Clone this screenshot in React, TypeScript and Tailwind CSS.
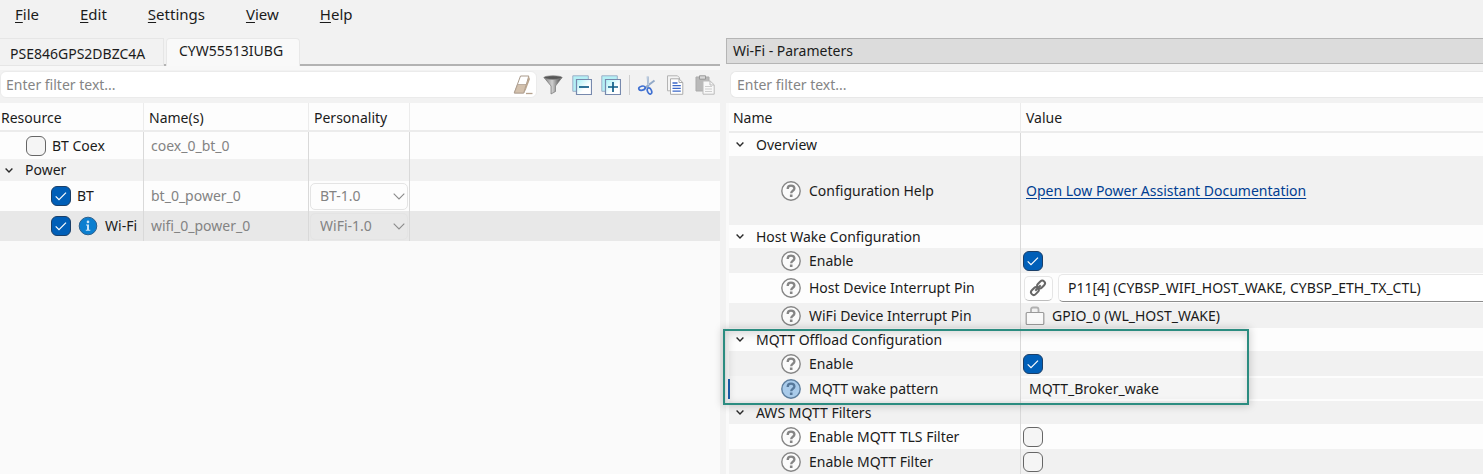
import { useId, type ReactNode } from "react";

const Chevron = ({ className = "" }: { className?: string }) => (
  <svg className={className} width="8" height="5" viewBox="0 0 8 5" fill="none" stroke="#2a2a2a" strokeWidth="1.4" aria-hidden="true">
    <path d="M.6.6 4 4 7.4.6" />
  </svg>
);

const HelpIcon = ({ active = false }: { active?: boolean }) => (
  <svg className="shrink-0" width="20" height="20" viewBox="0 0 20 20" fill="none" aria-hidden="true">
    <circle cx="10" cy="10" r="9.2" fill={active ? "#a9cbea" : "#fbfbfb"} stroke={active ? "#5d7e9e" : "#868686"} strokeWidth="1.4" />
    <path d="M6.700 7.900c0-2.200 1.400-3.300 3.300-3.300s3.400 1.100 3.400 2.900c0 2.300-3.200 2.300-3.200 4.800" stroke={active ? "#56789a" : "#858585"} strokeWidth="2.300" />
    <rect x="8.900" y="13.500" width="2.600" height="2.500" fill={active ? "#56789a" : "#858585"} />
  </svg>
);

const InfoIcon = () => (
  <svg className="shrink-0" width="20" height="20" viewBox="0 0 20 20" aria-hidden="true">
    <circle cx="10" cy="10" r="8.8" fill="#0b7fd0" stroke="#2c5f8c" strokeWidth="1" />
    <circle cx="10" cy="5.9" r="1.3" fill="#c7e4f8" />
    <path d="M8 8.6h3v5.2h1.3v1H7.8v-1H9V9.6H8z" fill="#c7e4f8" />
  </svg>
);

const EraserIcon = () => (
  <svg width="20" height="20" viewBox="0 0 20 20" aria-hidden="true">
    <path d="M7.5 1h8.3l-5 17H1.2z" fill="#fff" stroke="#a99a8b" />
    <path d="M4.6 9.5h8.6L10.6 18H1.4z" fill="#d3c1ad" stroke="#a99a8b" strokeWidth=".7" />
    <path d="M15.8 1.2 17 4l-4.2 11-2 3z" fill="#bba68f" />
    <path d="M13 18.5h6.5" stroke="#b5a28e" strokeWidth="1.3" />
  </svg>
);

const FunnelIcon = () => (
  <svg width="20" height="20" viewBox="0 0 20 20" aria-hidden="true">
    <defs>
      <linearGradient id="funnel" x1="0" x2="1">
        <stop offset="0" stopColor="#777" />
        <stop offset=".45" stopColor="#d0d0d0" />
        <stop offset="1" stopColor="#3c3c3c" />
      </linearGradient>
    </defs>
    <path d="M1 2.5 8 11v8l4.5-2.5V11L19 2.5z" fill="url(#funnel)" stroke="#777" strokeWidth=".7" />
    <ellipse cx="10" cy="2.6" rx="9" ry="1.8" fill="#555" stroke="#8b8b8b" strokeWidth=".7" />
  </svg>
);

const TreeBoxIcon = ({ plus = false }: { plus?: boolean }) => (
  <svg width="20" height="20" viewBox="0 0 20 20" fill="none" aria-hidden="true">
    <defs>
      <linearGradient id="treebox" x1="0" y1="0" x2="1" y2="1">
        <stop offset="0" stopColor="#a6f1f6" />
        <stop offset=".6" stopColor="#fff" />
      </linearGradient>
    </defs>
    <path d="M.8.8h15.5v15.5H.8z" fill="#b4f0f5" stroke="#9db0c8" />
    <path d="M4.5 4.5h15v15h-15z" fill="url(#treebox)" stroke="#7789ad" strokeWidth="1.2" />
    <path d={plus ? "M7 12h10M12 7v10" : "M7 12h10"} stroke="#0d5c86" strokeWidth="1.7" />
  </svg>
);

const ScissorsIcon = () => (
  <svg width="20" height="20" viewBox="0 0 20 20" fill="none" aria-hidden="true">
    <path d="M10.7 1.5 11.3 11 9.5 13M17.5 5.5 8 12.8" stroke="#93aac8" strokeWidth="2" />
    <path d="M10.7 1.5 11.3 10" stroke="#e3ebf5" strokeWidth=".7" />
    <ellipse cx="5" cy="13.2" rx="3.3" ry="2" transform="rotate(-15 5 13.2)" stroke="#3f70d2" strokeWidth="1.7" />
    <ellipse cx="12.5" cy="16" rx="2" ry="3.2" transform="rotate(-22 12.5 16)" stroke="#3f70d2" strokeWidth="1.7" />
  </svg>
);

const CopyIcon = () => (
  <svg width="20" height="20" viewBox="0 0 20 20" fill="none" aria-hidden="true">
    <path d="M1.5.8h10l2 2v13h-12z" fill="#f4f4f4" stroke="#b4b4b4" />
    <path d="M4.5 3.8h8.5l3.8 3.7v11.8H4.5z" fill="#fff" stroke="#aaa" />
    <path d="M13 3.8v3.7h3.8" stroke="#aaa" />
    <path d="M6.5 8h5M6.5 10.7h8.3M6.5 13.4h8.3M6.5 16.1h8.3" stroke="#3d68c8" strokeWidth="1.3" />
  </svg>
);

const PasteIcon = () => (
  <svg width="20" height="20" viewBox="0 0 20 20" fill="none" aria-hidden="true">
    <path d="M1 2h13v14H1z" fill="#b9b9b9" stroke="#ababab" />
    <path d="M4.5.8h6v3.4h-6z" fill="#d8d8d8" stroke="#999" />
    <path d="M8 6h7.2l4 3.8v9.4H8z" fill="#f8f8f8" stroke="#bbb" />
    <path d="M15 6v4h4" stroke="#bbb" />
    <path d="M10 11.5h7M10 14h7M10 16.5h7" stroke="#cecece" />
  </svg>
);

const LinkIcon = () => (
  <svg width="18" height="18" viewBox="0 0 18 18" fill="none" stroke="#666" strokeWidth="2" aria-hidden="true">
    <rect x="7.8" y="2.8" width="8.6" height="5.4" rx="2.7" transform="rotate(-45 12.1 5.5)" />
    <rect x="1.6" y="9.4" width="8.6" height="5.4" rx="2.7" transform="rotate(-45 5.9 12.1)" />
    <path d="m6.3 11.7 5.4-5.4" />
  </svg>
);

const LockIcon = () => (
  <svg className="shrink-0" width="20" height="20" viewBox="0 0 20 20" fill="none" aria-hidden="true">
    <path d="M6 7V3.500C6 2.200 6.900 1.500 8 1.500h3.500c1.200 0 2 .7 2 2V7" stroke="#b0b0b0" strokeWidth="1.800" />
    <rect x="1.200" y="6.500" width="17.600" height="12" rx="1" fill="#f9f9f9" stroke="#9a9a9a" strokeWidth="1.200" />
  </svg>
);

function Check({ id, checked = false, label }: { id?: string; checked?: boolean; label?: string }) {
  return (
    <span className="grid h-5 w-5 shrink-0">
      <input
        id={id}
        type="checkbox"
        defaultChecked={checked}
        aria-label={label}
        className="peer col-start-1 row-start-1 m-0 h-5 w-5 appearance-none rounded-md border border-[#666] bg-[#f5f5f5] checked:border-[#1b3f68] checked:bg-[#005fb8]"
      />
      <svg className="pointer-events-none invisible col-start-1 row-start-1 peer-checked:visible" width="20" height="20" viewBox="0 0 20 20" fill="none" aria-hidden="true">
        <path d="m4.700 10.300 3.300 3.400 7-7" stroke="#fff" strokeWidth="1.200" />
      </svg>
    </span>
  );
}

function Personality({ value, label }: { value: string; label: string }) {
  return (
    <span className="mx-px grid items-center">
      <select aria-label={label} defaultValue={value} className="col-start-1 row-start-1 h-[27px] w-full appearance-none rounded-[5px] border border-[#e4e4e4] bg-transparent pl-[9px] text-[#838383]">
        <option>{value}</option>
      </select>
      <svg className="pointer-events-none col-start-1 row-start-1 mr-[3px] justify-self-end" width="12" height="7" viewBox="0 0 12 7" fill="none" stroke="#8b8b8b" strokeWidth="1.100" aria-hidden="true">
        <path d="m.7.7 5.300 5.300L11.300.7" />
      </svg>
    </span>
  );
}

const menus = ["File", "Edit", "Settings", "View", "Help"];

const resCell = "border-r border-[#d9d9d9] p-0";
const headCell = "border-r border-b-2 border-[#ececec] p-0 pt-[2px] text-left font-normal";

function FilterInput({ label }: { label: string }) {
  return (
    <input
      type="text"
      aria-label={label}
      placeholder="Enter filter text..."
      className="h-full min-w-0 flex-1 bg-transparent outline-none placeholder:text-[#858585]"
    />
  );
}

function ToolButton({ label, children }: { label: string; children: ReactNode }) {
  return (
    <button type="button" aria-label={label} className="flex w-[21px] shrink-0 items-center">
      {children}
    </button>
  );
}

function Resources() {
  return (
    <section className="flex w-[48.55%] shrink-0 flex-col">
      <div role="tablist" className="flex h-7 border-b-2 border-[#b3b3b3]">
        <button type="button" role="tab" aria-selected="false" className="-mb-0.5 h-7 w-[164px] border border-l-0 border-[#e6e6e6] bg-[#f2f2f2] pt-[3px] pl-[10px] text-left">
          PSE846GPS2DBZC4A
        </button>
        <button type="button" role="tab" aria-selected="true" className="-mb-0.5 ml-[2px] h-7 w-[134px] rounded-t-sm border border-b-0 border-[#e8e8e8] bg-[#f9f9f9] pb-1 pl-3 text-left">
          CYW55513IUBG
        </button>
      </div>
      <div className="flex h-[37px] items-center border-t-4 border-[#f8f8f8] pr-1 pb-1">
        <div className="flex h-[27px] min-w-0 flex-1 items-center rounded-md border border-[#ebebeb] bg-white pr-[3px] pl-[5px]">
          <FilterInput label="Filter resources" />
          <button type="button" aria-label="Clear filter">
            <EraserIcon />
          </button>
        </div>
        <div className="ml-[6px] flex h-5 items-stretch gap-2">
          <ToolButton label="Filter"><FunnelIcon /></ToolButton>
          <ToolButton label="Collapse all"><TreeBoxIcon /></ToolButton>
          <ToolButton label="Expand all"><TreeBoxIcon plus /></ToolButton>
          <span className="-mx-px w-px bg-[#cfcfcf]" />
          <ToolButton label="Cut"><ScissorsIcon /></ToolButton>
          <ToolButton label="Copy"><CopyIcon /></ToolButton>
          <ToolButton label="Paste"><PasteIcon /></ToolButton>
        </div>
      </div>
      <div className="flex-1 bg-[#fafafa]">
        <table className="w-full table-fixed border-separate border-spacing-0">
          <colgroup>
            <col className="w-[144px]" />
            <col className="w-[165px]" />
            <col className="w-[101px]" />
            <col />
          </colgroup>
          <thead className="bg-[#fdfdfd]">
            <tr>
              <th className={`${headCell} h-[29px] pl-px`}>Resource</th>
              <th className={`${headCell} pl-[5px]`}>Name(s)</th>
              <th className={`${headCell} pl-[5px]`}>Personality</th>
              <th className="border-b-2 border-[#ececec] p-0" />
            </tr>
          </thead>
          <tbody>
            <tr className="bg-[#fdfdfd]">
              <td className={`${resCell} h-[27px]`}>
                <label className="flex items-center gap-[6px] pl-[26px]"><Check />BT Coex</label>
              </td>
              <td className={`${resCell} pl-[7px] text-[#838383]`}>coex_0_bt_0</td>
              <td className={resCell} />
              <td />
            </tr>
            <tr className="bg-[#f1f1f1]">
              <td className={`${resCell} h-[22px]`}>
                <div className="flex items-center gap-3 pl-[5px]"><Chevron />Power</div>
              </td>
              <td className={resCell} />
              <td className={resCell} />
              <td />
            </tr>
            <tr className="bg-[#fdfdfd]">
              <td className={`${resCell} h-[30px]`}>
                <label className="flex items-center gap-[6px] pl-[51px]"><Check checked />BT</label>
              </td>
              <td className={`${resCell} pl-[7px] text-[#838383]`}>bt_0_power_0</td>
              <td className={resCell}><Personality value="BT-1.0" label="BT personality" /></td>
              <td />
            </tr>
            <tr className="bg-[#e8e8e8]">
              <td className={`${resCell} h-[30px]`}>
                <label className="flex items-center gap-[7px] pl-[51px] whitespace-nowrap"><Check checked /><InfoIcon />Wi-Fi</label>
              </td>
              <td className={`${resCell} pl-[7px] text-[#838383]`}>wifi_0_power_0</td>
              <td className={resCell}><Personality value="WiFi-1.0" label="Wi-Fi personality" /></td>
              <td />
            </tr>
          </tbody>
        </table>
      </div>
    </section>
  );
}

function Group({ title, shaded = false }: { title: string; shaded?: boolean }) {
  return (
    <tr className={shaded ? "bg-[#f1f1f1]" : "bg-[#fdfdfd]"}>
      <td className="h-[23px] border-r border-[#d9d9d9] p-0">
        <div className="flex items-center gap-3 pl-[7px]"><Chevron />{title}</div>
      </td>
      <td />
    </tr>
  );
}

function Param({ name, height, shaded = false, active = false, htmlFor, children }: {
  name: string; height: string; shaded?: boolean; active?: boolean; htmlFor?: string; children: ReactNode;
}) {
  const bg = active ? "bg-[#f5f5f5]" : shaded ? "bg-[#f1f1f1]" : "bg-[#fdfdfd]";
  return (
    <tr className={bg}>
      <td className={`${height} border-r border-[#d9d9d9] p-0`}>
        <div className={active ? "-ml-px flex items-center gap-2 border-l-2 border-[#1b5fae] pl-[51px]" : "flex items-center gap-2 pl-[52px]"}>
          <HelpIcon active={active} />
          {htmlFor ? <label htmlFor={htmlFor}>{name}</label> : <span>{name}</span>}
        </div>
      </td>
      <td className="p-0">{children}</td>
    </tr>
  );
}

function Parameters() {
  const id = useId();
  return (
    <section className="flex min-w-0 flex-1 flex-col">
      <h1 className="flex h-[26px] items-center border border-r-0 border-[#b5b5b5] bg-[#dcdcdc] pl-[6px]">Wi-Fi - Parameters</h1>
      <div className="flex h-[39px] items-center pt-[2px] pl-1">
        <div className="flex h-[27px] flex-1 items-center rounded-l-md border border-r-0 border-[#e8e8e8] bg-white pl-[6px]">
          <FilterInput label="Filter parameters" />
        </div>
      </div>
      <div className="relative flex-1 bg-[#fafafa] pl-[3px]">
        <table className="w-full table-fixed border-separate border-spacing-0">
          <colgroup>
            <col className="w-[292px]" />
            <col />
          </colgroup>
          <thead className="bg-[#fdfdfd]">
            <tr>
              <th className={`${headCell} h-[30px] pl-1`}>Name</th>
              <th className="border-b-2 border-[#ececec] p-0 pt-[2px] pl-[5px] text-left font-normal">Value</th>
            </tr>
          </thead>
          <tbody>
            <Group title="Overview" />
            <Param name="Configuration Help" height="h-[69px]" shaded>
              <a href="#documentation" className="ml-[5px] text-[#003e92] underline underline-offset-2">Open Low Power Assistant Documentation</a>
            </Param>
            <Group title="Host Wake Configuration" />
            <Param name="Enable" height="h-[25px]" shaded htmlFor={`${id}-host`}>
              <div className="pl-[2px]"><Check id={`${id}-host`} checked /></div>
            </Param>
            <Param name="Host Device Interrupt Pin" height="h-[30px]" htmlFor={`${id}-pin`}>
              <div className="flex items-center gap-[5px] pl-[3px]">
                <button type="button" aria-label="Go to linked pin" className="flex h-[25px] w-[29px] shrink-0 items-center justify-center rounded-[5px] border border-[#e5e5e5] border-b-[#bdbdbd] bg-[#fefefe]">
                  <LinkIcon />
                </button>
                <select id={`${id}-pin`} className="h-7 min-w-0 flex-1 appearance-none rounded-l-[5px] border border-r-0 border-[#e8e8e8] border-b-[#8d8d8d] bg-white pl-[9px]">
                  <option>P11[4] (CYBSP_WIFI_HOST_WAKE, CYBSP_ETH_TX_CTL)</option>
                </select>
              </div>
            </Param>
            <Param name="WiFi Device Interrupt Pin" height="h-[25px]" shaded>
              <div className="flex items-center gap-[7px] pl-1"><LockIcon />GPIO_0 (WL_HOST_WAKE)</div>
            </Param>
            <Group title="MQTT Offload Configuration" />
            <Param name="Enable" height="h-[25px]" shaded htmlFor={`${id}-mqtt`}>
              <div className="pl-[2px]"><Check id={`${id}-mqtt`} checked /></div>
            </Param>
            <Param name="MQTT wake pattern" height="h-[25px]" active htmlFor={`${id}-pattern`}>
              <input id={`${id}-pattern`} type="text" defaultValue="MQTT_Broker_wake" className="block h-[25px] w-full border-y-2 border-[#fdfdfd] bg-transparent pl-2 outline-none" />
            </Param>
            <Group title="AWS MQTT Filters" shaded />
            <Param name="Enable MQTT TLS Filter" height="h-[25px]" htmlFor={`${id}-tls`}>
              <div className="pl-[2px]"><Check id={`${id}-tls`} /></div>
            </Param>
            <Param name="Enable MQTT Filter" height="h-[25px]" shaded htmlFor={`${id}-filter`}>
              <div className="pl-[2px]"><Check id={`${id}-filter`} /></div>
            </Param>
          </tbody>
        </table>
        <div className="pointer-events-none absolute top-[226px] -left-[3px] h-[76px] w-[526px] border-2 border-[#2b8c80] shadow-[0_0_8px_1px_rgba(0,0,0,0.18),inset_2px_2px_8px_1px_rgba(0,0,0,0.14)]" />
      </div>
    </section>
  );
}

export default function App() {
  return (
    <div className="flex min-h-screen flex-col overflow-hidden bg-[#f2f2f2] font-['Noto_Sans','Open_Sans',sans-serif] text-[14px] leading-5 text-[#1b1b1b]">
      <nav className="flex h-[38px] items-start gap-[41px] pt-1 pl-[15px] text-[15px]">
        {menus.map((m) => (
          <button key={m} type="button">
            <span className="underline underline-offset-2">{m[0]}</span>
            {m.slice(1)}
          </button>
        ))}
      </nav>
      <main className="flex flex-1 gap-[6px]">
        <Resources />
        <Parameters />
      </main>
    </div>
  );
}
